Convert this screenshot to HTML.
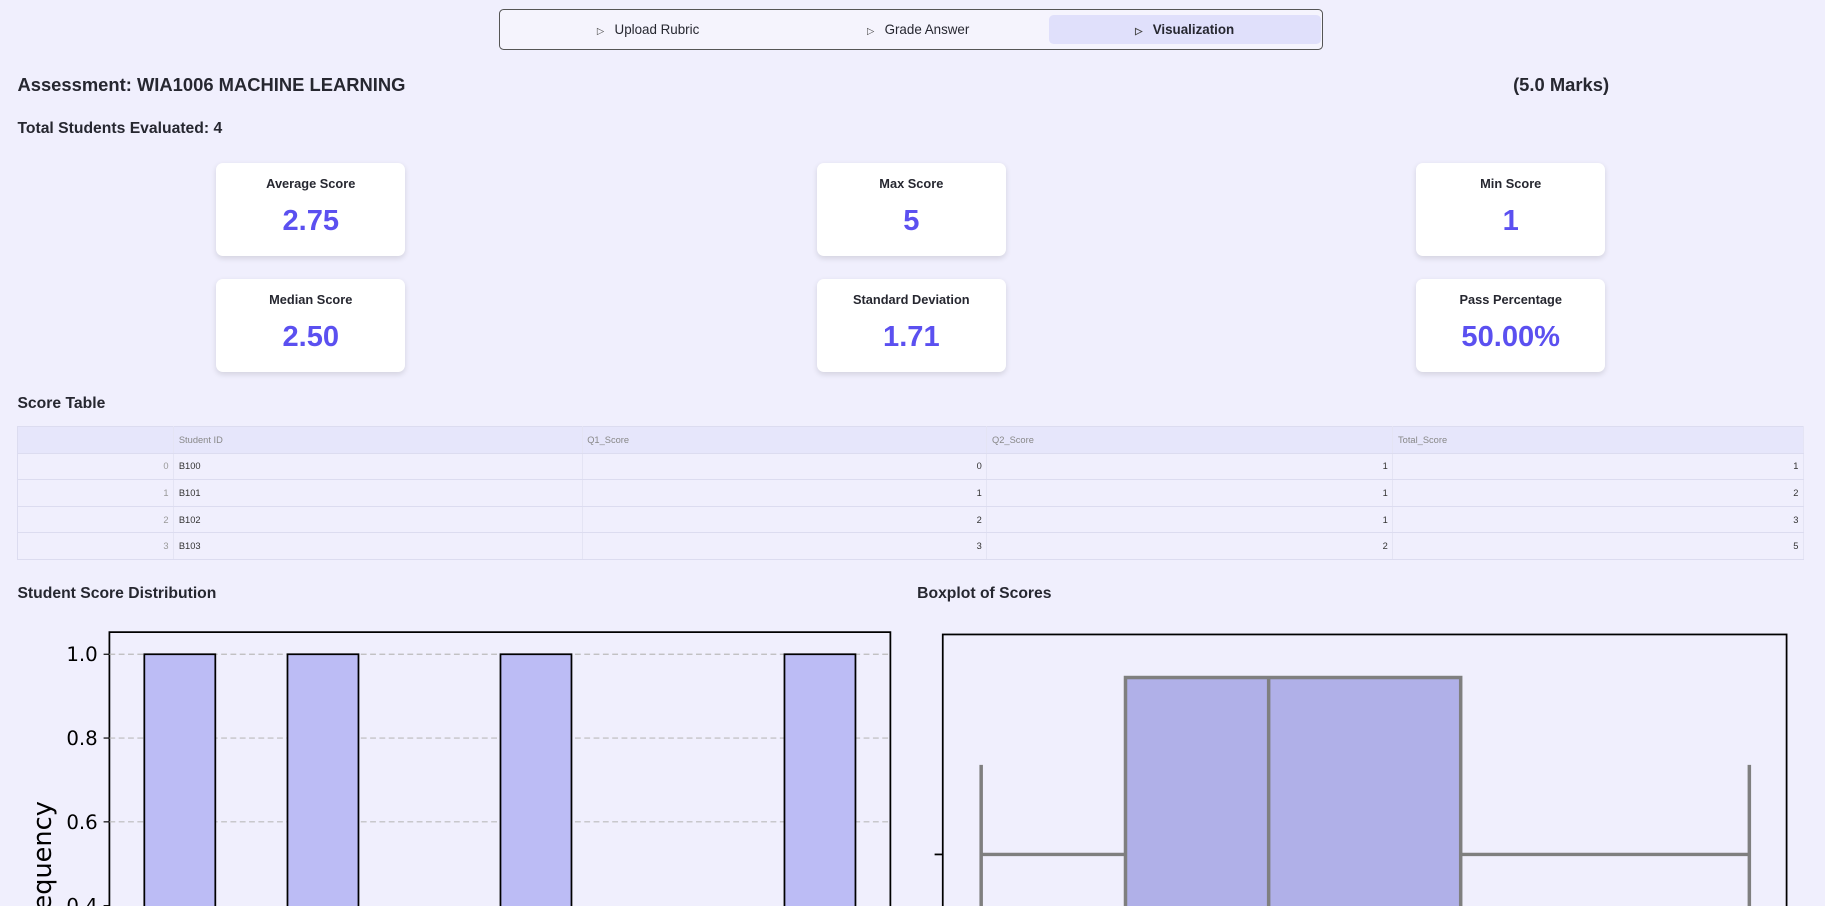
<!DOCTYPE html>
<html><head><meta charset="utf-8"><style>
html,body{margin:0;padding:0;background:#f0effd;overflow:hidden}
body{width:1568px;height:778px;zoom:1.16390;position:relative;font-family:"Liberation Sans",sans-serif;color:#262730}
.a{position:absolute}
.tabs{left:429px;top:8px;width:706px;height:33px;border:1px solid #555;border-radius:4px;background:#f5f4fd}
.tab{position:absolute;top:4px;height:25px;line-height:25px;font-size:11.5px;text-align:center;width:234px}
.tab i{font-style:normal;font-size:8px;margin-right:9px;color:#444}
.card{position:absolute;width:162px;height:80px;background:#fff;border-radius:6px;box-shadow:0 2px 5px rgba(0,0,0,.12);text-align:center}
.card .t{font-size:11px;font-weight:bold;margin-top:11px}
.card .v{font-size:25px;font-weight:bold;color:#5b50f0;margin-top:12px}
h{position:absolute;font-weight:bold}
table{position:absolute;left:15px;top:366px;width:1535px;border-collapse:collapse;font-size:8px;color:#333;border:1px solid #dcdcf0;border-radius:4px}
td{height:22px;border-bottom:1px solid #dcdcf0;border-right:1px solid #e4e4f4;padding:0 4px}
tr:first-child td{background:#e6e6fb;color:#888}
td.r{text-align:right}
td.i{color:#999;text-align:right}
</style></head><body>
<div class="a tabs">
<div class="tab" style="left:10px"><i>▷</i>Upload Rubric</div>
<div class="tab" style="left:242px"><i>▷</i>Grade Answer</div>
<div class="tab" style="left:471px;background:#e0e0fb;border-radius:4px;font-weight:bold"><i>▷</i>Visualization</div>
</div>
<h style="left:15px;top:64px;font-size:15.8px">Assessment: WIA1006 MACHINE LEARNING</h>
<h style="left:1300px;top:64px;font-size:15.8px">(5.0 Marks)</h>
<h style="left:15px;top:103px;font-size:13.5px">Total Students Evaluated: 4</h>
<div class="card" style="left:186px;top:140px"><div class="t">Average Score</div><div class="v">2.75</div></div>
<div class="card" style="left:702px;top:140px"><div class="t">Max Score</div><div class="v">5</div></div>
<div class="card" style="left:1217px;top:140px"><div class="t">Min Score</div><div class="v">1</div></div>
<div class="card" style="left:186px;top:240px"><div class="t">Median Score</div><div class="v">2.50</div></div>
<div class="card" style="left:702px;top:240px"><div class="t">Standard Deviation</div><div class="v">1.71</div></div>
<div class="card" style="left:1217px;top:240px"><div class="t">Pass Percentage</div><div class="v">50.00%</div></div>
<h style="left:15px;top:339px;font-size:13.5px">Score Table</h>
<table>
<tr><td style="width:125px"></td><td style="width:342px">Student ID</td><td style="width:339px">Q1_Score</td><td style="width:340px">Q2_Score</td><td>Total_Score</td></tr>
<tr><td class="i">0</td><td>B100</td><td class="r">0</td><td class="r">1</td><td class="r">1</td></tr>
<tr><td class="i">1</td><td>B101</td><td class="r">1</td><td class="r">1</td><td class="r">2</td></tr>
<tr><td class="i">2</td><td>B102</td><td class="r">2</td><td class="r">1</td><td class="r">3</td></tr>
<tr><td class="i">3</td><td>B103</td><td class="r">3</td><td class="r">2</td><td class="r">5</td></tr>
</table>
<h style="left:15px;top:503px;font-size:13.5px">Student Score Distribution</h>
<h style="left:788px;top:503px;font-size:13.5px">Boxplot of Scores</h>
<svg class="a" style="left:0;top:530px" width="1568" height="248" font-family="DejaVu Sans,sans-serif">
<rect x="94" y="13" width="671" height="260" fill="#f0effd" stroke="#000" stroke-width="1.5"/>
<g stroke="#bbb" stroke-dasharray="5,3"><line x1="94" x2="765" y1="32" y2="32"/><line x1="94" x2="765" y1="104" y2="104"/><line x1="94" x2="765" y1="176" y2="176"/></g>
<g fill="#bcbcf5" stroke="#000" stroke-width="1.5">
<rect x="124" y="32" width="61" height="230"/><rect x="247" y="32" width="61" height="230"/><rect x="430" y="32" width="61" height="230"/><rect x="674" y="32" width="61" height="230"/></g>
<g stroke="#000"><line x1="89" x2="94" y1="32" y2="32"/><line x1="89" x2="94" y1="104" y2="104"/><line x1="89" x2="94" y1="176" y2="176"/><line x1="89" x2="94" y1="248" y2="248"/></g>
<g font-size="17" text-anchor="end" fill="#000"><text x="84" y="38">1.0</text><text x="84" y="110">0.8</text><text x="84" y="182">0.6</text><text x="84" y="254">0.4</text></g>
<text transform="translate(44,215) rotate(-90)" font-size="22" text-anchor="middle" fill="#000">Frequency</text>
<rect x="810" y="15" width="725" height="260" fill="#f0effd" stroke="#000" stroke-width="1.5"/>
<g stroke="#7f7f7f" stroke-width="3" fill="none">
<rect x="967" y="52" width="288" height="230" fill="#b0b0e8"/>
<line x1="1090" x2="1090" y1="52" y2="282"/>
<line x1="843" x2="967" y1="204" y2="204"/><line x1="1255" x2="1503" y1="204" y2="204"/>
<line x1="843" x2="843" y1="127" y2="282"/><line x1="1503" x2="1503" y1="127" y2="282"/></g>
<line x1="803" x2="810" y1="204" y2="204" stroke="#000" stroke-width="1.5"/>
</svg>
</body></html>
